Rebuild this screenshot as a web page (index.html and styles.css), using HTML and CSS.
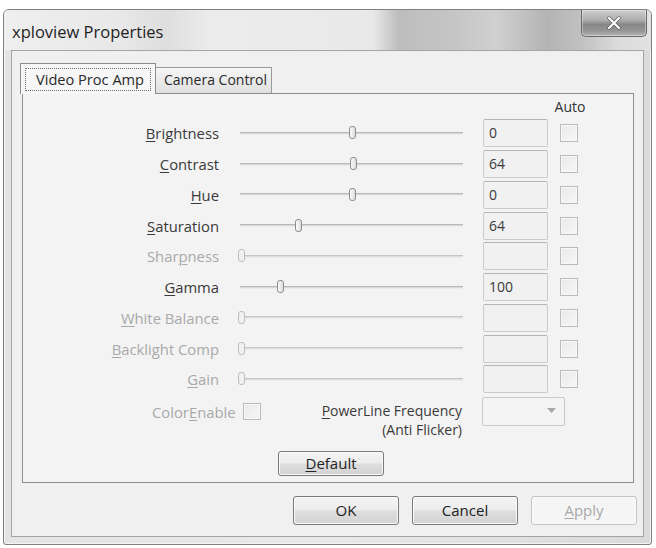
FILE: index.html
```html
<!DOCTYPE html>
<html>
<head>
<meta charset="utf-8">
<title>xploview Properties</title>
<link rel="stylesheet" href="styles.css">
</head>
<body>
<div class="window">
  <div class="titlebar">
    <span class="title">xploview Properties</span>
    <div class="close">
      <svg width="18" height="14" viewBox="0 0 18 14"><path d="M4 2 L14 12 M14 2 L4 12" stroke="#5a5a5a" stroke-width="3.4" stroke-linecap="round"/><path d="M4 2 L14 12 M14 2 L4 12" stroke="#ffffff" stroke-width="2.2" stroke-linecap="round"/></svg>
    </div>
  </div>
  <div class="client">
    <div class="tabs">
      <div class="tab active"><span class="focus">Video Proc Amp</span></div>
      <div class="tab">Camera Control</div>
    </div>
    <div class="panel">
      <div class="grid">
        <div class="auto-h">Auto</div>

        <div class="lbl"><u>B</u>rightness</div>
        <div class="slider"><div class="track"></div><div class="thumb" style="left:50.7%"></div></div>
        <div class="edit">0</div>
        <div class="chk"></div>

        <div class="lbl"><u>C</u>ontrast</div>
        <div class="slider"><div class="track"></div><div class="thumb" style="left:51%"></div></div>
        <div class="edit">64</div>
        <div class="chk"></div>

        <div class="lbl"><u>H</u>ue</div>
        <div class="slider"><div class="track"></div><div class="thumb" style="left:50.7%"></div></div>
        <div class="edit">0</div>
        <div class="chk"></div>

        <div class="lbl"><u>S</u>aturation</div>
        <div class="slider"><div class="track"></div><div class="thumb" style="left:26.5%"></div></div>
        <div class="edit">64</div>
        <div class="chk"></div>

        <div class="lbl dis">Shar<u>p</u>ness</div>
        <div class="slider dis"><div class="track"></div><div class="thumb" style="left:1.2%"></div></div>
        <div class="edit"></div>
        <div class="chk"></div>

        <div class="lbl"><u>G</u>amma</div>
        <div class="slider"><div class="track"></div><div class="thumb" style="left:18.6%"></div></div>
        <div class="edit">100</div>
        <div class="chk"></div>

        <div class="lbl dis"><u>W</u>hite Balance</div>
        <div class="slider dis"><div class="track"></div><div class="thumb" style="left:1.2%"></div></div>
        <div class="edit"></div>
        <div class="chk"></div>

        <div class="lbl dis"><u>B</u>acklight Comp</div>
        <div class="slider dis"><div class="track"></div><div class="thumb" style="left:1.2%"></div></div>
        <div class="edit"></div>
        <div class="chk"></div>

        <div class="lbl dis"><u>G</u>ain</div>
        <div class="slider dis"><div class="track"></div><div class="thumb" style="left:1.2%"></div></div>
        <div class="edit"></div>
        <div class="chk"></div>
      </div>

      <div class="extra">
        <div class="color-enable">
          <span class="dis">Color<u>E</u>nable</span>
          <div class="chk small"></div>
        </div>
        <div class="powerline">
          <div class="pl-line"><u>P</u>owerLine Frequency</div>
          <div class="pl-line">(Anti Flicker)</div>
        </div>
        <div class="combo"><svg width="9" height="6" viewBox="0 0 9 6"><path d="M0 0 H9 L4.5 5 Z" fill="#a8a8a8"/></svg></div>
      </div>

      <div class="default-row">
        <div class="btn default"><u>D</u>efault</div>
      </div>
    </div>
    <div class="buttons">
      <div class="btn">OK</div>
      <div class="btn">Cancel</div>
      <div class="btn disabled"><u>A</u>pply</div>
    </div>
  </div>
</div>
</body>
</html>
```

FILE: styles.css
```css
* { box-sizing: border-box; }
html, body { margin: 0; padding: 0; background: #ffffff; }
body {
  font-family: "Open Sans", "Noto Sans", "Liberation Sans", sans-serif;
  font-size: 14.8px;
  color: #333333;
}
u { text-decoration: underline; text-underline-offset: 2px; text-decoration-thickness: 1px; }

.window {
  margin: 9px 0 0 3px;
  width: 649px;
  height: 536px;
  border: 1px solid #7f7f7f;
  border-radius: 6px 6px 3px 3px;
  background: linear-gradient(90deg, #e4e4e4 0%, #e9e9e9 50%, #dadada 100%);
  display: flex;
  flex-direction: column;
  box-shadow: inset 0 0 0 1px #f4f4f4;
}

.titlebar {
  height: 40px;
  display: flex;
  align-items: flex-start;
  border-radius: 5px 5px 0 0;
  background: linear-gradient(90deg, #efefef 0%, #e8e8e8 18%, #dedede 25%, #ececec 32%, #e9e9e9 57%, #bdbdbd 61%, #c6c6c6 70%, #d0d0d0 76%, #b4b4b4 84%, #c0c0c0 89%, #dcdcdc 95%, #e2e2e2 100%);
}
.title {
  margin: 11px 0 0 8px;
  font-size: 16.5px;
  line-height: 22px;
  color: #1f1f1f;
}
.close {
  margin-left: auto;
  margin-right: 4px;
  width: 66px;
  height: 27px;
  border: 1px solid #6a6a6a;
  border-top: none;
  border-radius: 0 0 5px 5px;
  background: linear-gradient(180deg, #cfcfcf 0%, #acacac 40%, #878787 55%, #959595 80%, #b4b4b4 100%);
  box-shadow: inset 0 0 0 1px rgba(255,255,255,0.35);
  display: flex;
  align-items: center;
  justify-content: center;
}

.client {
  flex: 1;
  margin: 0 7px 7px 7px;
  border: 1px solid #a4a4a4;
  background: #f0f0f0;
  padding-top: 12px;
  display: flex;
  flex-direction: column;
}

.tabs {
  display: flex;
  align-items: flex-end;
  height: 30px;
  margin-left: 8px;
}
.tab {
  height: 26px;
  padding: 0 8px;
  width: 116px;
  border: 1px solid #9a9a9a;
  border-bottom: none;
  border-left: none;
  background: linear-gradient(180deg, #f5f5f5 0%, #ebebeb 50%, #e0e0e0 100%);
  font-size: 14px;
  line-height: 24px;
  color: #2a2a2a;
  white-space: nowrap;
}
.tab.active {
  position: relative;
  z-index: 2;
  width: 136px;
  height: 31px;
  margin-bottom: -1px;
  border-left: 1px solid #8c8c8c;
  border-color: #8c8c8c;
  background: #f6f6f6;
  padding: 4px 4px 0 4px;
  font-size: 14.6px;
}
.focus {
  display: block;
  height: 23px;
  border: 1px dotted #707070;
  padding-left: 10px;
  line-height: 21px;
}

.panel {
  margin-left: 10px;
  width: 612px;
  border: 1px solid #8e8e8e;
  background: #f3f3f3;
  padding: 2px 0 6px 0;
}

.grid {
  display: grid;
  grid-template-columns: 215px 245px 77px 18px;
  grid-template-rows: 22px repeat(9, 30.75px);
  align-items: center;
}
.auto-h {
  grid-column: 4;
  justify-self: center;
  white-space: nowrap;
  line-height: 22px;
  color: #333;
  font-size: 14px;
  margin-left: 2px;
}
.lbl {
  grid-column: 1;
  text-align: right;
  padding-right: 19px;
  line-height: 20px;
  color: #3a3a3a;
  white-space: nowrap;
}
.dis { color: #a9a9a9; }
.lbl.dis { color: #a9a9a9; }

.slider {
  position: relative;
  width: 225px;
  height: 16px;
  display: flex;
  align-items: center;
}
.track {
  flex: 1;
  margin-left: 2px;
  height: 3px;
  border-top: 1px solid #b9b9b9;
  border-bottom: 1px solid #ececec;
  background: #d8d8d8;
}
.thumb {
  position: absolute;
  top: 1px;
  margin-left: -3px;
  width: 7px;
  height: 13px;
  border: 1px solid #8d8d8d;
  border-radius: 3px;
  background: linear-gradient(90deg, #fafafa, #dedede);
}
.slider.dis .track { border-top-color: #c6c6c6; background: #dedede; }
.slider.dis .thumb { border-color: #bdbdbd; background: #f1f1f1; }

.edit {
  width: 65px;
  height: 28px;
  border: 1px solid #cbcbcb;
  border-top-color: #b5b5b5;
  border-radius: 2px;
  background: #f1f1f1;
  padding-left: 5px;
  line-height: 26px;
  font-size: 14px;
  color: #3a3a3a;
}
.chk {
  width: 18px;
  height: 18px;
  border: 1px solid #bababa;
  background: linear-gradient(135deg, #e9e9e9, #f7f7f7);
  box-shadow: inset 0 0 0 1px #f8f8f8;
}

.extra {
  display: flex;
  align-items: flex-start;
  margin-top: 2px;
  height: 36px;
}
.color-enable {
  display: flex;
  align-items: flex-start;
  margin-left: 129px;
  margin-top: 6px;
  line-height: 18px;
}
.color-enable .chk { margin-left: 7px; margin-top: 0; }
.chk.small { width: 18px; height: 17px; }
.powerline {
  margin-left: auto;
  margin-top: 4px;
  text-align: right;
  font-size: 14px;
  color: #3a3a3a;
  white-space: nowrap;
}
.pl-line { line-height: 19.5px; }
.combo {
  margin-left: 20px;
  margin-right: 68px;
  width: 83px;
  height: 29px;
  border: 1px solid #c9c9c9;
  border-radius: 2px;
  background: #f4f4f4;
  display: flex;
  align-items: center;
  justify-content: flex-end;
  padding-right: 8px;
}

.default-row {
  display: flex;
  margin-top: 18px;
  padding-left: 255px;
}

.btn {
  width: 106px;
  height: 29px;
  border: 1px solid #7a7a7a;
  border-radius: 3px;
  background: linear-gradient(180deg, #f4f4f4 0%, #ececec 48%, #dedede 52%, #d2d2d2 100%);
  box-shadow: inset 0 0 0 1px #fafafa;
  text-align: center;
  line-height: 27px;
  font-size: 15px;
  color: #222;
}
.btn.default { height: 25px; line-height: 23px; }
.btn.disabled {
  border-color: #c4c4c4;
  background: #f5f5f5;
  color: #a9a9a9;
}

.buttons {
  display: flex;
  justify-content: flex-end;
  gap: 13px;
  margin-top: 13px;
  padding-right: 6px;
}
```
